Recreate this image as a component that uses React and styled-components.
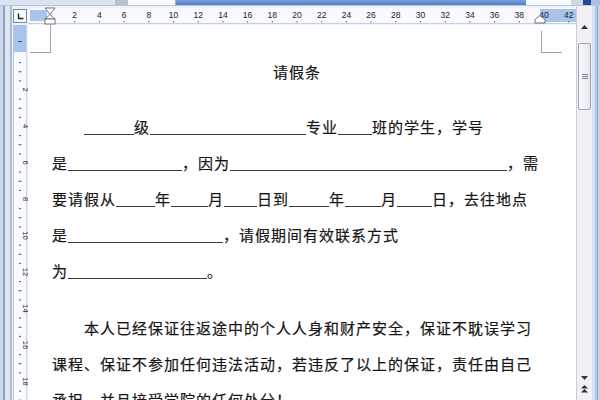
import styled, { createGlobalStyle } from 'styled-components';

const GlobalStyle = createGlobalStyle`
  html, body { margin: 0; padding: 0; background: #fff; }
  body { font-family: "Noto Sans CJK SC", "Noto Sans", sans-serif; }
`;

const Window = styled.div`
  width: 600px;
  height: 400px;
  overflow: hidden;
  display: grid;
  grid-template-columns: 12px 16px 548px 16px 8px;
  grid-template-rows: 6px 19px 375px;
  background: #fff;
`;

const TopStrip = styled.div`
  grid-column: 1 / -1;
  grid-row: 1;
  display: flex;
  border-bottom: 1px solid #b9c7db;
  box-sizing: border-box;
`;

const Segment = styled.div`
  width: ${p => p.w}px;
  flex: ${p => (p.grow ? 1 : 'none')};
  background: ${p => p.bg};
  border-right: ${p => (p.edge ? '1px solid #9fb0c8' : 'none')};
`;

const LeftFrame = styled.div`
  grid-column: 1;
  grid-row: 2 / 4;
  background: linear-gradient(to right, #cdd9ea 0 3px, #8ea3c2 3px 5px, #dfe5ee 5px 10px, #a9bcd6 10px 12px);
`;

const RightFrame = styled.div`
  grid-column: 5;
  grid-row: 2 / 4;
  background: linear-gradient(to right, #d6e2f1 0 3px, #b3c9e7 3px 5px, #86a6d4 5px 6px, #c3d5ed 6px);
`;

const CornerCell = styled.div`
  grid-column: 2;
  grid-row: 2;
  display: flex;
  align-items: flex-end;
  justify-content: center;
  padding-bottom: 2px;
  box-sizing: border-box;
  background: #eef2f8;
`;

const TabBox = styled.div`
  width: 12px;
  height: 12px;
  border: 1px solid #7b8aa3;
  background: #fbfcfe;
  display: flex;
  align-items: center;
  justify-content: center;
`;

const RulerCell = styled.div`
  grid-column: ${p => p.col};
  grid-row: ${p => p.row};
  background: #eef2f8;
  overflow: hidden;
`;

const ScrollBar = styled.div`
  grid-column: 4;
  grid-row: 2 / 4;
  display: flex;
  flex-direction: column;
  align-items: stretch;
  border-left: 1px solid #c9ced8;
  background: linear-gradient(to right, #f4eef1, #eef2f8);
`;

const ScrollButton = styled.div`
  height: ${p => p.h}px;
  display: flex;
  justify-content: center;
  align-items: ${p => p.align || 'center'};
  padding-bottom: ${p => p.pb || 0}px;
  box-sizing: border-box;
`;

const Thumb = styled.div`
  margin: 11px 1px 0 1px;
  height: 65px;
  border: 1px solid #9aa3b1;
  border-radius: 2px;
  background: linear-gradient(to right, #fbfbfc, #e2e6ec);
  display: flex;
  align-items: center;
  justify-content: center;
`;

const Grip = styled.div`
  width: 6px;
  height: 6px;
  background: repeating-linear-gradient(to bottom, #7d8696 0 1px, transparent 1px 2px);
`;

const Spacer = styled.div`
  flex: 1;
`;

const Page = styled.div`
  grid-column: 3;
  grid-row: 3;
  position: relative;
  background: #fff;
  padding: 29px 0 0 24px;
  color: #151515;
  font-size: 15px;
  letter-spacing: 1px;
  -webkit-text-stroke: 0.2px #151515;
`;

const CornerMark = styled.div`
  position: absolute;
  left: ${p => p.x}px;
  top: ${p => p.y}px;
  width: ${p => p.w}px;
  height: ${p => p.h}px;
  border-bottom: 1px solid #a5a5a5;
  ${p => (p.side === 'left' ? 'border-right: 1px solid #a5a5a5;' : 'border-left: 1px solid #a5a5a5;')}
`;

const Column = styled.div`
  width: 490px;
`;

const Title = styled.div`
  text-align: center;
  line-height: 36px;
  height: 36px;
`;

const Lines = styled.div`
  margin-top: 19px;
`;

const Line = styled.div`
  display: flex;
  align-items: baseline;
  height: 36px;
  line-height: 36px;
  white-space: nowrap;
  padding-left: ${p => p.indent || 0}px;
`;

const Blank = styled.span`
  display: inline-block;
  width: ${p => p.w}px;
  height: 0;
  border-bottom: 1px solid #3a3a3a;
  transform: translateY(2px);
`;

const Para = styled.p`
  margin: 21px 0 0 0;
  line-height: 36px;
  text-indent: 32px;
`;

function HorizontalRuler() {
  const nums = [];
  for (let n = 2; n <= 42; n += 2) nums.push(n);
  return (
    <svg width="548" height="19" viewBox="0 0 548 19">
      <rect x="0" y="2" width="548" height="15" fill="#f8fafd" />
      <rect x="2" y="4" width="17" height="11" fill="#a9c3ec" />
      <rect x="512" y="3" width="36" height="13" fill="#a9c3ec" />
      <line x1="0" y1="17.5" x2="548" y2="17.5" stroke="#c3d1e6" />
      {nums.map(n => {
        const x = 22 + (n / 2) * 24.7;
        return (
          <g key={n}>
            <text x={x} y="12" fontSize="8.5" fontFamily="Liberation Sans, sans-serif" fill="#222" textAnchor="middle">{n}</text>
            <rect x={x - 0.5} y="15" width="1" height="1.5" fill="#666" />
          </g>
        );
      })}
      <polygon points="17,2 27,2 22,8.5" fill="#fff" stroke="#555" strokeWidth="0.8" />
      <polygon points="17,13 27,13 22,8.5" fill="#fff" stroke="#555" strokeWidth="0.8" />
      <rect x="17" y="13" width="10" height="5" fill="#fff" stroke="#555" strokeWidth="0.8" />
      <polygon points="507,17 507,13.5 512,9.5 517,13.5 517,17" fill="#fff" stroke="#555" strokeWidth="0.8" />
    </svg>
  );
}

function VerticalRuler() {
  const marks = [];
  const step = 36.5;
  for (let k = 0; k <= 10; k++) {
    const y = 28 + k * step;
    if (k > 0) {
      marks.push(
        <text key={'t' + k} x="0" y="0" fontSize="7.5" fontFamily="Liberation Sans, sans-serif" fill="#2a2a2a" textAnchor="middle"
          transform={`translate(10.5 ${y}) rotate(90)`}>{k * 2}</text>
      );
    }
    [0.25, 0.5, 0.75].forEach(f => {
      const ty = y + f * step;
      const w = f === 0.5 ? 3 : 2;
      marks.push(<rect key={'m' + k + f} x={8 - w / 2} y={ty} width={w} height="1" fill="#555" />);
    });
  }
  return (
    <svg width="16" height="375" viewBox="0 0 16 375">
      <rect x="1" y="0" width="14" height="375" fill="#f8fafd" />
      <line x1="1.5" y1="0" x2="1.5" y2="375" stroke="#b8c8e0" />
      <line x1="14.5" y1="0" x2="14.5" y2="375" stroke="#c7d4e8" />
      <rect x="2" y="0" width="12" height="27" fill="#a9c3ec" />
      <rect x="6" y="16" width="4" height="1" fill="#555" />
      {marks}
    </svg>
  );
}

function Arrow({ dir }) {
  return (
    <svg width="7" height="4" viewBox="0 0 7 4">
      {dir === 'up' ? <polygon points="0,4 7,4 3.5,0" fill="#333" /> : <polygon points="0,0 7,0 3.5,4" fill="#333" />}
    </svg>
  );
}

function PageUpIcon() {
  return (
    <svg width="7" height="8" viewBox="0 0 7 8">
      <polygon points="0,3.5 7,3.5 3.5,0" fill="#333" />
      <polygon points="0,7.5 7,7.5 3.5,4" fill="#333" />
    </svg>
  );
}

function TabIcon() {
  return (
    <svg width="7" height="7" viewBox="0 0 7 7">
      <path d="M1.5 0.5 V5.5 H6.5" stroke="#222" strokeWidth="1.4" fill="none" />
    </svg>
  );
}

export default function App() {
  return (
    <>
      <GlobalStyle />
      <Window>
        <TopStrip>
          <Segment w={115} bg="#dbe5f2" />
          <Segment w={13} bg="#b7c1cf" />
          <Segment w={47} bg="#f9fafc" edge />
          <Segment w={350} bg="linear-gradient(to bottom, #7aa0dc, #4f7ec8)" />
          <Segment w={45} bg="#f9fafc" />
          <Segment w={12} bg="#cdd7e5" />
          <Segment w={8} bg="#24479a" />
          <Segment grow bg="#aac1e2" />
        </TopStrip>
        <LeftFrame />
        <CornerCell>
          <TabBox><TabIcon /></TabBox>
        </CornerCell>
        <RulerCell col={3} row={2}>
          <HorizontalRuler />
        </RulerCell>
        <ScrollBar>
          <ScrollButton h={26} align="flex-end" pb={3}><Arrow dir="up" /></ScrollButton>
          <Thumb><Grip /></Thumb>
          <Spacer />
          <ScrollButton h={14}><Arrow dir="down" /></ScrollButton>
          <ScrollButton h={15} align="flex-start"><PageUpIcon /></ScrollButton>
        </ScrollBar>
        <RightFrame />
        <RulerCell col={2} row={3}>
          <VerticalRuler />
        </RulerCell>
        <Page>
          <CornerMark side="left" x={2} y={0} w={20} h={27} />
          <CornerMark side="right" x={513} y={6} w={20} h={21} />
          <Column>
            <Title>请假条</Title>
            <Lines>
              <Line indent={32}>
                <Blank w={50} />级<Blank w={156} />专业<Blank w={34} />班的学生，学号
              </Line>
              <Line>
                是<Blank w={114} />，因为<Blank w={277} />，需
              </Line>
              <Line>
                要请假从<Blank w={39} />年<Blank w={37} />月<Blank w={33} />日到<Blank w={40} />年<Blank w={36} />月<Blank w={35} />日，去往地点
              </Line>
              <Line>
                是<Blank w={155} />，请假期间有效联系方式
              </Line>
              <Line>
                为<Blank w={139} />。
              </Line>
            </Lines>
            <Para>
              本人已经保证往返途中的个人人身和财产安全，保证不耽误学习课程、保证不参加任何违法活动，若违反了以上的保证，责任由自己承担，并且接受学院的任何处分！
            </Para>
          </Column>
        </Page>
      </Window>
    </>
  );
}
